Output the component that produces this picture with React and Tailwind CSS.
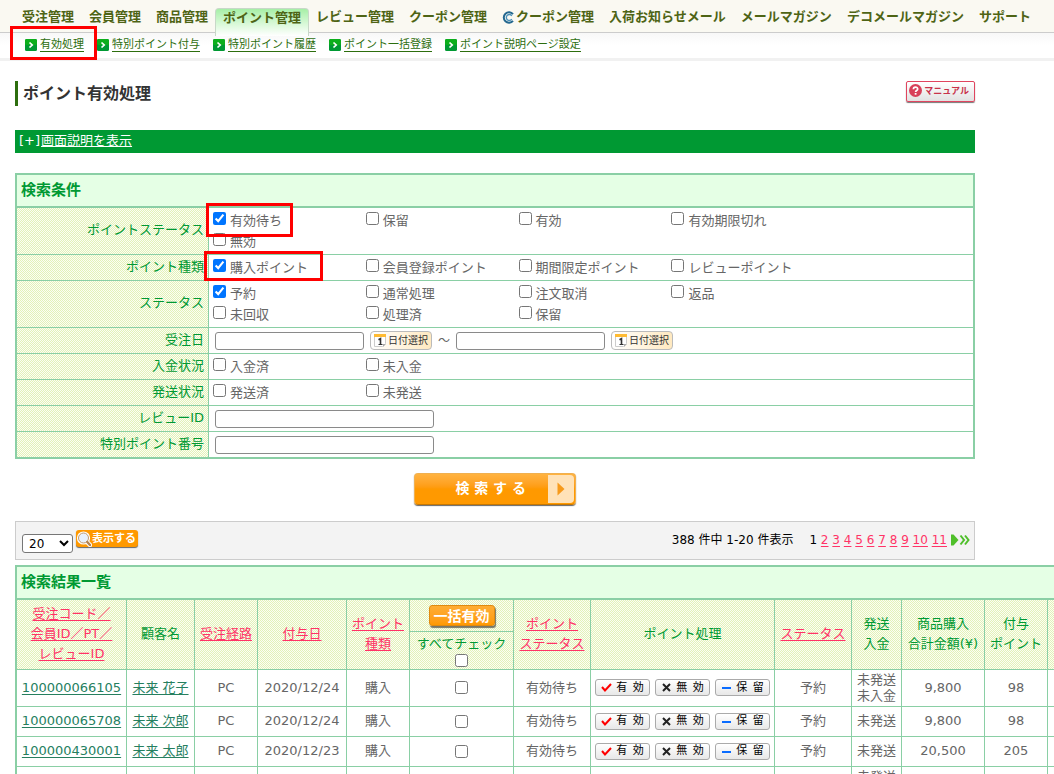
import { useState } from "react";
import { clsx } from "clsx";

const NAV_ITEMS = [
  { label: "受注管理" },
  { label: "会員管理" },
  { label: "商品管理" },
  { label: "ポイント管理", active: true },
  { label: "レビュー管理" },
  { label: "クーポン管理" },
  { label: "クーポン管理", icon: true },
  { label: "入荷お知らせメール" },
  { label: "メールマガジン" },
  { label: "デコメールマガジン" },
  { label: "サポート" },
];

const SUB_ITEMS = ["有効処理", "特別ポイント付与", "特別ポイント履歴", "ポイント一括登録", "ポイント説明ページ設定"];

const POINT_STATUS = ["有効待ち", "保留", "有効", "有効期限切れ", "無効"];
const POINT_TYPES = ["購入ポイント", "会員登録ポイント", "期間限定ポイント", "レビューポイント"];
const ORDER_STATUS = ["予約", "通常処理", "注文取消", "返品", "未回収", "処理済", "保留"];

const PAGES = [2, 3, 4, 5, 6, 7, 8, 9, 10, 11];

const ROWS = [
  { id: "100000066105", name: "未来 花子", route: "PC", date: "2020/12/24", shipping: ["未発送", "未入金"], total: "9,800", points: "98" },
  { id: "100000065708", name: "未来 次郎", route: "PC", date: "2020/12/24", shipping: ["未発送"], total: "9,800", points: "98" },
  { id: "100000430001", name: "未来 太郎", route: "PC", date: "2020/12/23", shipping: ["未発送"], total: "20,500", points: "205" },
];

const HATCH = "bg-[repeating-conic-gradient(#fcfdf4_0_25%,#e2f2b8_0_50%)] bg-size-[2px_2px]";

export default function App() {
  return (
    <div className="h-screen overflow-hidden bg-white font-['DejaVu_Sans','Noto_Sans_CJK_JP',sans-serif] text-[13px] leading-5 text-[#666]">
      <MainNav />
      <SubNav />
      <main className="ml-[15px]">
        <div className="max-w-[960px]">
          <header className="mt-5 flex h-[25px] items-start justify-between">
            <h1 className="flex h-full items-center border-l-3 border-[#2d6e0e] pl-[5px] text-base font-bold text-[#333]">ポイント有効処理</h1>
            <ManualButton />
          </header>
          <div className="mt-6 flex h-[23px] gap-px bg-[#009933] px-1 leading-[22px] text-white">
            [+]
            <a href="#help" className="underline">画面説明を表示</a>
          </div>
          <SearchForm />
          <ResultToolbar />
        </div>
        <ResultTable />
      </main>
    </div>
  );
}

function MainNav() {
  return (
    <nav className="flex h-[33px] gap-[15px] border-b border-[#ccc] bg-[#faf9f2] pl-[22px] font-bold whitespace-nowrap text-[#4e6415]">
      {NAV_ITEMS.map((item, index) => (
        <a
          key={index}
          href="#nav"
          className={clsx(
            "flex shrink-0 items-center",
            item.active
              ? "-mx-2 mt-2 -mb-1 rounded-t border-x border-t border-[#c8d8c8] bg-linear-to-b from-[#a6efa6] to-white px-[7px] pb-2.5"
              : "pt-0.5",
          )}
        >
          {item.icon ? <CouponIcon /> : null}
          {item.label}
        </a>
      ))}
    </nav>
  );
}

function SubNav() {
  return (
    <nav className="flex h-7 items-center gap-[13px] border-b-3 border-[#f1f1f1] bg-linear-to-b from-[#f8f8f8] via-white to-white pb-0.5 pl-[25px] text-[11px] whitespace-nowrap text-[#2d6e0e]">
      {SUB_ITEMS.map((label, index) => (
        <a key={label} href="#sub" className="relative flex shrink-0 items-center gap-[3px]">
          <GoIcon />
          <span className="border-b border-[#2d6e0e] leading-[13px]">{label}</span>
          {index === 0 ? <Marker className="-top-[12px] -right-[13px] -left-[15px] h-[34px]" /> : null}
        </a>
      ))}
    </nav>
  );
}

function Marker({ className }) {
  return <span className={clsx("pointer-events-none absolute z-10 border-3 border-[#f00]", className)} />;
}

function ManualButton() {
  return (
    <button className="flex h-[21px] items-center gap-0.5 rounded-xs border border-[#e0455f] bg-linear-to-b from-white to-[#e2e2e2] pr-[5px] pl-0.5 pb-0.5 text-[9px] font-bold text-[#c8324a] shadow-[0_1px_1px_#777]">
      <svg width="13" height="13" viewBox="0 0 13 13">
        <circle cx="6.5" cy="6.5" r="6.5" fill="#d8405a" />
        <path d="M4.4 5.2C4.4 2.4 8.7 2.4 8.7 5c0 1.6-2.1 1.5-2.1 3" fill="none" stroke="#fff" strokeWidth="1.7" />
        <rect x="5.7" y="9" width="1.8" height="1.7" fill="#fff" />
      </svg>
      マニュアル
    </button>
  );
}

function SearchForm() {
  return (
    <form onSubmit={(event) => event.preventDefault()}>
      <section className="mt-5 border-2 border-[#8acfa5]">
        <h2 className="h-[33px] border-b-2 border-[#8acfa5] bg-[#e5ffe5] px-1 text-[15px] leading-[30px] font-bold text-[#009933]">検索条件</h2>
        <FormRow label="ポイントステータス">
          <CheckGroup options={POINT_STATUS} initial="有効待ち" marker="-top-[7px] -left-[3px] h-[34px] w-[87px]" />
        </FormRow>
        <FormRow label="ポイント種類">
          <CheckGroup options={POINT_TYPES} initial="購入ポイント" marker="-top-[6px] -left-[5px] h-[30px] w-[119px]" />
        </FormRow>
        <FormRow label="ステータス">
          <CheckGroup options={ORDER_STATUS} initial="予約" />
        </FormRow>
        <FormRow label="受注日">
          <div className="flex h-[21px] items-center gap-1.5 pl-1.5">
            <TextBox label="受注日（開始）" className="w-[149px]" />
            <DateButton />
            <span className="text-xs">～</span>
            <TextBox label="受注日（終了）" className="w-[149px]" />
            <DateButton />
          </div>
        </FormRow>
        <FormRow label="入金状況">
          <CheckGroup options={["入金済", "未入金"]} />
        </FormRow>
        <FormRow label="発送状況">
          <CheckGroup options={["発送済", "未発送"]} />
        </FormRow>
        <FormRow label="レビューID">
          <div className="flex h-[21px] items-center pl-1.5">
            <TextBox label="レビューID" className="w-[219px]" />
          </div>
        </FormRow>
        <FormRow label="特別ポイント番号">
          <div className="flex h-[21px] items-center pl-1.5">
            <TextBox label="特別ポイント番号" className="w-[219px]" />
          </div>
        </FormRow>
      </section>
      <button className="mx-auto mt-3.5 flex h-8 w-[162px] items-stretch rounded border border-[#f0b050] border-b-[#c87800] bg-linear-to-b from-[#ffb340] to-[#ff9900] to-50% p-px text-sm font-bold text-white shadow-[0_1px_1px_#666]">
        <span className="flex flex-1 items-center justify-end pr-[22px] pb-0.5">検 索 す る</span>
        <span className="flex w-[26px] items-center justify-center rounded-r bg-[#ffe2b8]">
          <svg width="8" height="14" viewBox="0 0 8 14">
            <path d="M0.5 0.5L7.5 7L0.5 13.5Z" fill="#f79a1a" />
          </svg>
        </span>
      </button>
    </form>
  );
}

function FormRow({ label, children }) {
  return (
    <div className="flex border-b border-[#8acfa5] last:border-b-0">
      <div className={clsx("flex w-48 shrink-0 items-center justify-end border-r border-[#8acfa5] pr-1 pb-0.5 text-[#009933]", HATCH)}>{label}</div>
      <div className="min-w-0 flex-1 py-0.5">{children}</div>
    </div>
  );
}

function CheckGroup({ options, initial, marker }) {
  return (
    <div className="grid grid-cols-[repeat(4,20%)]">
      {options.map((option) => (
        <label key={option} className="relative flex h-[21px] items-start gap-1 pl-1 leading-[21px] whitespace-nowrap">
          <input type="checkbox" defaultChecked={option === initial} className="mt-0.5 size-[13px] shrink-0" />
          {option}
          {marker && option === initial ? <Marker className={marker} /> : null}
        </label>
      ))}
    </div>
  );
}

function TextBox({ label, className }) {
  return <input type="text" aria-label={label} className={clsx("h-[18px] rounded-[3px] border border-[#8a8a8a] bg-white px-1 text-xs", className)} />;
}

function DateButton() {
  return (
    <button type="button" className="flex h-[19px] w-[62px] items-center justify-center gap-px rounded border border-[#bbb] bg-linear-to-r from-white to-[#ffe9c0] text-[10px] text-[#333]">
      <svg width="13" height="13" viewBox="0 0 13 13">
        <path d="M0.5 1.5h11v8l-3 3h-8z" fill="#fff" stroke="#ccc" />
        <rect x="0" y="0" width="12" height="3" fill="#fb3" />
        <path d="M4.5 5.8L6.5 4.6V10.5" fill="none" stroke="#333" strokeWidth="1.6" />
        <path d="M4.5 10.5h4" stroke="#333" />
        <path d="M9 13V10h3z" fill="#aaa" />
      </svg>
      日付選択
    </button>
  );
}

function ResultToolbar() {
  return (
    <div className="mt-4 flex h-[39px] items-start border border-[#ccc] bg-[#f3f3f3] pl-1.5 text-xs text-black">
      <select aria-label="表示件数" defaultValue="20" className="mt-3 h-[19px] w-[51px] rounded-[3px] border border-[#767676] bg-white pl-0.5">
        <option>20</option>
        <option>50</option>
        <option>100</option>
      </select>
      <button className="mt-2 ml-[3px] flex h-[17px] w-[62px] items-center rounded-[3px] bg-[#ff9900] text-[11px] leading-[17px] font-bold whitespace-nowrap text-white shadow-[0_1px_1px_#666]">
        <svg width="16" height="16" viewBox="0 0 16 16" className="shrink-0">
          <path d="M10 10L14 14" stroke="#fff" strokeWidth="4.5" strokeLinecap="round" />
          <circle cx="7.5" cy="7" r="6.6" fill="#fff" />
          <circle cx="7.5" cy="7" r="5" fill="#e8f1fc" stroke="#c49a6c" />
          <path d="M11.3 11L14 14" stroke="#b58350" strokeWidth="2.4" strokeLinecap="round" />
        </svg>
        表示する
      </button>
      <div className="mt-2 ml-auto flex items-center pr-1 leading-5 whitespace-nowrap">
        <span>388 件中 1-20 件表示</span>
        <span className="ml-4">
          1{" "}
          {PAGES.map((page) => (
            <span key={page}>
              <a href="#page" className="text-[#ff3366] underline underline-offset-2">{page}</a>{" "}
            </span>
          ))}
        </span>
        <a href="#next" aria-label="次へ" className="ml-1">
          <svg width="19" height="12" viewBox="0 0 19 12">
            <path d="M0 0.5h2.5L7.5 6L2.5 11.5H0z" fill="#4fbf2a" />
            <path d="M9.5 1.5L13 6L9.5 10.5M14 1.5L17.5 6L14 10.5" fill="none" stroke="#4fbf2a" strokeWidth="2" />
          </svg>
        </a>
      </div>
    </div>
  );
}

function ResultTable() {
  const [checked, setChecked] = useState([]);
  const allChecked = checked.length === ROWS.length;

  const toggle = (id) => {
    setChecked(checked.includes(id) ? checked.filter((item) => item !== id) : [...checked, id]);
  };

  return (
    <section className="mt-[5px] w-max border-2 border-[#8acfa5]">
      <h2 className="h-[33px] border-b-2 border-[#8acfa5] bg-[#e5ffe5] px-1 text-[15px] leading-[30px] font-bold text-[#009933]">検索結果一覧</h2>
      <table className="w-[1111px] table-fixed border-separate border-spacing-0 text-center">
        <colgroup>
          <col className="w-[110px]" />
          <col className="w-[68px]" />
          <col className="w-[63px]" />
          <col className="w-[89px]" />
          <col className="w-[63px]" />
          <col className="w-[104px]" />
          <col className="w-[77px]" />
          <col className="w-[184px]" />
          <col className="w-[77px]" />
          <col className="w-[50px]" />
          <col className="w-[83px]" />
          <col className="w-[63px]" />
          <col className="w-20" />
        </colgroup>
        <thead>
          <tr className="h-[70px]">
            <Head sortable lines={["受注コード／", "会員ID／PT／", "レビューID"]} />
            <Head lines={["顧客名"]} />
            <Head sortable lines={["受注経路"]} />
            <Head sortable lines={["付与日"]} />
            <Head sortable lines={["ポイント", "種類"]} />
            <th className={clsx("border-r border-b border-[#8acfa5] p-0 font-normal text-[#009933]", HATCH)}>
              <div className="flex h-8 items-center justify-center border-b border-[#8acfa5]">
                <button className="h-[21px] w-[66px] rounded-[3px] border border-[#e08a10] bg-linear-to-b from-[#ffad33] to-[#ff9900] text-sm leading-[18px] font-bold text-white shadow-[1px_2px_1px_#776]">一括有効</button>
              </div>
              <label className="flex h-[37px] flex-col items-center pt-0.5 whitespace-nowrap">
                すべてチェック
                <input
                  type="checkbox"
                  className="size-[13px]"
                  checked={allChecked}
                  onChange={() => setChecked(allChecked ? [] : ROWS.map((row) => row.id))}
                />
              </label>
            </th>
            <Head sortable lines={["ポイント", "ステータス"]} />
            <Head lines={["ポイント処理"]} />
            <Head sortable lines={["ステータス"]} />
            <Head lines={["発送", "入金"]} />
            <Head lines={["商品購入", "合計金額(¥)"]} />
            <Head lines={["付与", "ポイント"]} />
            <Head sortable lines={["表示期限日"]} />
          </tr>
        </thead>
        <tbody>
          {ROWS.map((row) => (
            <tr key={row.id} className={row.shipping.length > 1 ? "h-[37px]" : "h-[30px]"}>
              <Cell><a href="#order" className="text-[#267f5f] underline underline-offset-2">{row.id}</a></Cell>
              <Cell><a href="#customer" className="text-[#267f5f] underline underline-offset-2">{row.name}</a></Cell>
              <Cell>{row.route}</Cell>
              <Cell>{row.date}</Cell>
              <Cell>購入</Cell>
              <Cell>
                <input type="checkbox" aria-label={row.id} className="mx-auto block size-[13px]" checked={checked.includes(row.id)} onChange={() => toggle(row.id)} />
              </Cell>
              <Cell>有効待ち</Cell>
              <Cell>
                <div className="flex justify-center gap-[5px]">
                  <ActionButton icon={<path d="M1 5L4 8.5L10 2" stroke="#f00" />} label={"有\u2002効"} />
                  <ActionButton icon={<path d="M2 2L9 9M9 2L2 9" stroke="#222" />} label={"無\u2002効"} />
                  <ActionButton icon={<path d="M1 6H10" stroke="#0a6cff" />} label={"保\u2002留"} />
                </div>
              </Cell>
              <Cell>予約</Cell>
              <Cell>{row.shipping.map((line) => <div key={line}>{line}</div>)}</Cell>
              <Cell>{row.total}</Cell>
              <Cell>{row.points}</Cell>
              <Cell />
            </tr>
          ))}
          <tr className="h-[37px]">
            <Cell /><Cell /><Cell /><Cell /><Cell /><Cell /><Cell /><Cell /><Cell />
            <Cell><div>未発送</div><div>未入金</div></Cell>
            <Cell /><Cell /><Cell />
          </tr>
        </tbody>
      </table>
    </section>
  );
}

function Head({ lines, sortable }) {
  const content = lines.map((line) => <span key={line} className="block">{line}</span>);
  return (
    <th className={clsx("border-r border-b border-[#8acfa5] px-0 pt-0 pb-0.5 font-normal whitespace-nowrap text-[#009933]", HATCH)}>
      {sortable ? <a href="#sort" className="text-[#ff3366] underline underline-offset-2">{content}</a> : content}
    </th>
  );
}

function Cell({ children }) {
  return <td className="border-r border-b border-[#8acfa5] px-0 pt-0 pb-px leading-4 whitespace-nowrap">{children}</td>;
}

function ActionButton({ icon, label }) {
  return (
    <button className="flex h-[17px] w-[55px] items-center justify-center gap-1 rounded-[3px] border border-[#aaa] bg-linear-to-b from-white to-[#e8e8e8] text-[11px] text-black">
      <svg width="11" height="11" viewBox="0 0 11 11" fill="none" strokeWidth="2">
        {icon}
      </svg>
      {label}
    </button>
  );
}

function GoIcon() {
  return (
    <svg width="12" height="12" viewBox="0 0 12 12">
      <rect width="12" height="12" rx="1.5" fill="#009933" />
      <rect width="12" height="6" rx="1.5" fill="#0cae1c" />
      <path d="M4.5 3.5L7.2 6L4.5 8.5" fill="none" stroke="#fff" strokeWidth="1.7" />
    </svg>
  );
}

function CouponIcon() {
  return (
    <svg width="13" height="13" viewBox="0 0 13 13" className="mr-px">
      <path d="M11 3.2A5.2 5.2 0 1 0 11 9.8" fill="none" stroke="#24688f" strokeWidth="2" />
      <path d="M9.8 4.8A3 3 0 1 0 9.8 8.2" fill="none" stroke="#4a90b8" strokeWidth="1.4" />
    </svg>
  );
}
